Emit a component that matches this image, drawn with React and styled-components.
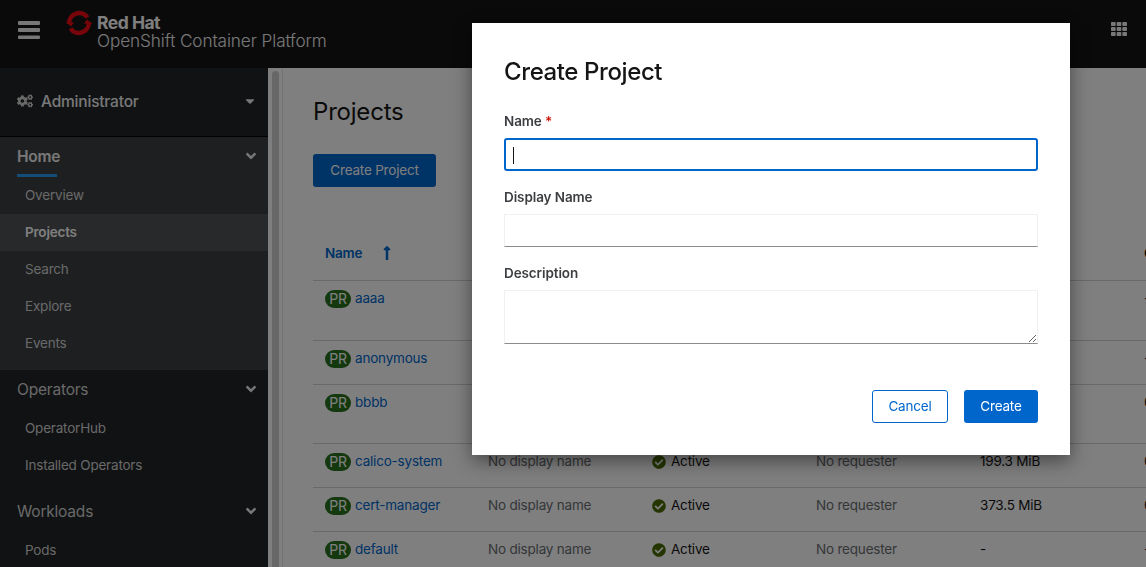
import React from 'react'
import styled, { createGlobalStyle } from 'styled-components'
import { FaCogs, FaCaretDown, FaAngleDown, FaTh, FaCheckCircle, FaLongArrowAltUp } from 'react-icons/fa'

const GlobalStyle = createGlobalStyle`
  html, body {
    margin: 0;
    height: 100%;
    overflow: hidden;
    font-family: Inter, "Noto Sans", sans-serif;
    font-size: 13.5px;
    letter-spacing: -0.2px;
    color: #151515;
    background: #fff;
  }
  * { box-sizing: border-box; }
`

const Page = styled.div`
  height: 567px;
  display: flex;
  flex-direction: column;
  overflow: hidden;
`

const Masthead = styled.header`
  height: 68px;
  flex: none;
  background: #151515;
  display: flex;
  align-items: flex-start;
  padding: 10px 19px 0 18px;
`

const Burger = styled.svg`
  width: 22px;
  height: 18px;
  margin-top: 11px;
  flex: none;
`

const LogoMark = styled.svg`
  width: 28px;
  height: 26px;
  margin-left: 25px;
  flex: none;
`

const Brand = styled.div`
  margin-left: 4px;
  padding-top: 4px;
  color: #fff;
  line-height: 18px;
`

const BrandTop = styled.div`
  font-size: 17.5px;
  font-weight: 700;
  letter-spacing: -0.5px;
`

const BrandBottom = styled.div`
  font-size: 17.2px;
  font-weight: 300;
  color: #f0f0f0;
  letter-spacing: -0.1px;
`

const AppsIcon = styled(FaTh)`
  margin: 11px 0 0 auto;
  font-size: 16px;
  color: #f0f0f0;
`

const Body = styled.div`
  flex: 1;
  display: flex;
  min-height: 0;
`

const Sidebar = styled.nav`
  width: 268px;
  flex: none;
  background: #212427;
  color: #d2d2d2;
  overflow: hidden;
`

const Perspective = styled.div`
  height: 69px;
  display: flex;
  align-items: center;
  padding: 0 11px 2px 17px;
  border-bottom: 1px solid #030303;
  font-size: 15.5px;
  font-weight: 500;
  color: #f0f0f0;

  svg:first-child {
    font-size: 16px;
    margin-right: 8px;
    color: #d2d2d2;
  }
  svg:last-child {
    margin-left: auto;
    font-size: 14px;
    color: #f0f0f0;
  }
`

const NavGroup = styled.div`
  padding-bottom: 8px;
  background: ${p => (p.$open ? '#3c3f42' : 'transparent')};
`

const GroupTitle = styled.div`
  position: relative;
  height: 40px;
  display: flex;
  align-items: center;
  justify-content: space-between;
  padding: 0 9px 2px 17px;
  font-size: 15.5px;
  font-weight: ${p => (p.$open ? 600 : 400)};
  color: ${p => (p.$open ? '#f0f0f0' : '#d2d2d2')};

  svg {
    font-size: 16px;
    color: #f0f0f0;
  }

  &::after {
    content: '';
    display: ${p => (p.$open ? 'block' : 'none')};
    position: absolute;
    left: 17px;
    bottom: 0;
    width: 40px;
    height: 3px;
    background: #2b9af3;
  }
`

const NavItem = styled.div`
  height: 37px;
  display: flex;
  align-items: center;
  padding: 0 0 2px 25px;
  font-size: 13.5px;
  font-weight: ${p => (p.$active ? 600 : 400)};
  color: ${p => (p.$active ? '#fff' : '#d2d2d2')};
  background: ${p => (p.$active ? '#4f5255' : 'transparent')};
`

const Scrollbar = styled.div`
  width: 15px;
  flex: none;
  background: #fff;
  border-right: 1px solid #e8e8e8;
  padding: 3px 3px 0 4px;
`

const ScrollThumb = styled.div`
  height: 100%;
  background: #cfcfcf;
  border-radius: 4px 4px 0 0;
`

const Main = styled.main`
  flex: 1;
  min-width: 0;
  overflow: hidden;
  background: #fff;
  padding: 27px 0 0 30px;
`

const PageTitle = styled.h1`
  margin: 0;
  font-size: 24px;
  line-height: 34px;
  font-weight: 400;
`

const PrimaryButton = styled.button`
  display: block;
  height: 33px;
  padding: 0 0 2px;
  border: 0;
  border-radius: 3px;
  background: #0066cc;
  color: #fff;
  font: inherit;
  letter-spacing: inherit;
  font-size: 13.5px;
`

const CreateButton = styled(PrimaryButton)`
  margin-top: 25px;
  width: 123px;
`

const Table = styled.div`
  margin-top: 39px;
  width: 980px;
`

const HeaderRow = styled.div`
  display: grid;
  grid-template-columns: 163px repeat(5, 164px);
  height: 55px;
  padding-bottom: 1px;
  align-items: center;
  border-bottom: 1px solid #d2d2d2;
  font-weight: 600;
`

const Row = styled.div`
  display: grid;
  grid-template-columns: 163px repeat(5, 164px);
  height: ${p => p.$height}px;
  padding-top: 7px;
  border-bottom: 1px solid #d2d2d2;
  line-height: 21px;
`

const Cell = styled.div`
  padding-left: 12px;
  display: flex;
  align-items: center;
  height: 21px;
  white-space: nowrap;
  color: ${p => (p.$muted ? '#6a6e73' : 'inherit')};
`

const NameHead = styled(Cell)`
  color: #0066cc;

  svg {
    margin-left: 17px;
    font-size: 16px;
  }
`

const Badge = styled.span`
  width: 26px;
  height: 18px;
  border-radius: 9px;
  flex: none;
  display: inline-flex;
  align-items: center;
  justify-content: center;
  margin-right: 4px;
  background: #28721f;
  color: #fff;
  font-size: 14px;
  font-weight: 400;
`

const NameLink = styled.a`
  color: #0066cc;
`

const StatusIcon = styled(FaCheckCircle)`
  color: #486b00;
  font-size: 14px;
  margin-right: 5px;
`

const Backdrop = styled.div`
  position: fixed;
  inset: 0;
  background: rgba(0, 0, 0, 0.5);
`

const Modal = styled.div`
  position: absolute;
  left: 472px;
  top: 23px;
  width: 598px;
  padding: 32px;
  background: #fff;
  box-shadow: 0 6px 18px rgba(0, 0, 0, 0.45);
`

const ModalTitle = styled.h2`
  margin: 0 0 22px;
  font-size: 24px;
  line-height: 34px;
  font-weight: 500;
  letter-spacing: -0.4px;
`

const Label = styled.label`
  display: block;
  margin: ${p => (p.$first ? 0 : '16px')} 0 7px;
  line-height: 20px;
  font-weight: 600;
  letter-spacing: -0.1px;
  color: #3c3f42;
`

const Required = styled.span`
  color: #c9190b;
`

const FieldWrap = styled.div`
  position: relative;
`

const TextInput = styled.input`
  display: block;
  width: 100%;
  height: 33px;
  outline: 0;
  background: #fff;
  border: 1px solid #f0f0f0;
  border-bottom-color: #8a8d90;
  ${p => p.$focused && 'border: 2px solid #0066cc; border-radius: 3px;'}
`

const TextArea = styled.textarea`
  display: block;
  width: 100%;
  height: 54px;
  outline: 0;
  background: #fff;
  border: 1px solid #f0f0f0;
  border-bottom-color: #8a8d90;
`

const Caret = styled.span`
  position: absolute;
  left: 9px;
  top: 9px;
  width: 1px;
  height: 17px;
  background: #151515;
`

const Actions = styled.div`
  margin-top: 46px;
  display: flex;
  justify-content: flex-end;
  gap: 16px;
`

const SecondaryButton = styled.button`
  width: 76px;
  height: 33px;
  padding: 0 0 2px;
  border: 1px solid #0066cc;
  border-radius: 3px;
  background: #fff;
  color: #0066cc;
  font: inherit;
  letter-spacing: inherit;
  font-size: 13.5px;
`

const ConfirmButton = styled(PrimaryButton)`
  width: 74px;
`

const navGroups = [
  { title: 'Home', open: true, items: ['Overview', 'Projects', 'Search', 'Explore', 'Events'] },
  { title: 'Operators', items: ['OperatorHub', 'Installed Operators'] },
  { title: 'Workloads', items: ['Pods'] },
]

const projects = [
  { name: 'aaaa', height: 60, memory: '-', cpu: '-' },
  { name: 'anonymous', height: 44, memory: '-', cpu: '-' },
  { name: 'bbbb', height: 59, memory: '120.4 MiB', cpu: '0.010 cores' },
  { name: 'calico-system', height: 44, memory: '199.3 MiB', cpu: '0.015 cores' },
  { name: 'cert-manager', height: 44, memory: '373.5 MiB', cpu: '0.005 cores' },
  { name: 'default', height: 44, memory: '-', cpu: '-' },
]

function RedHatLogo() {
  return (
    <LogoMark viewBox="0 0 28 26">
      <g fill="none" stroke="#ee0a14" strokeWidth="4.4">
        <path d="M4.2 13.5 A10 10 0 0 1 22.5 7.5" />
        <path d="M23.8 12.5 A10 10 0 0 1 5.5 18.5" />
      </g>
      <path d="M0.5 12 L9 12.5 L6 16.5 Z" fill="#ee0a14" />
      <path d="M27.5 14 L19 13.5 L22 9.5 Z" fill="#ee0a14" />
    </LogoMark>
  )
}

export default function App() {
  return (
    <Page>
      <GlobalStyle />
      <Masthead>
        <Burger viewBox="0 0 22 18" fill="#f0f0f0">
          <rect y="0" width="22" height="4" rx="1" />
          <rect y="7" width="22" height="4" rx="1" />
          <rect y="14.5" width="22" height="3.5" rx="1" />
        </Burger>
        <RedHatLogo />
        <Brand>
          <BrandTop>Red Hat</BrandTop>
          <BrandBottom>OpenShift Container Platform</BrandBottom>
        </Brand>
        <AppsIcon />
      </Masthead>
      <Body>
        <Sidebar>
          <Perspective>
            <FaCogs />
            Administrator
            <FaCaretDown />
          </Perspective>
          {navGroups.map(group => (
            <NavGroup key={group.title} $open={group.open}>
              <GroupTitle $open={group.open}>
                {group.title}
                <FaAngleDown />
              </GroupTitle>
              {group.items.map(item => (
                <NavItem key={item} $active={item === 'Projects'}>{item}</NavItem>
              ))}
            </NavGroup>
          ))}
        </Sidebar>
        <Scrollbar>
          <ScrollThumb />
        </Scrollbar>
        <Main>
          <PageTitle>Projects</PageTitle>
          <CreateButton>Create Project</CreateButton>
          <Table>
            <HeaderRow>
              <NameHead>Name<FaLongArrowAltUp /></NameHead>
              <Cell>Display Name</Cell>
              <Cell>Status</Cell>
              <Cell>Requester</Cell>
              <Cell>Memory</Cell>
              <Cell>CPU</Cell>
            </HeaderRow>
            {projects.map(project => (
              <Row key={project.name} $height={project.height}>
                <Cell><Badge>PR</Badge><NameLink>{project.name}</NameLink></Cell>
                <Cell $muted>No display name</Cell>
                <Cell><StatusIcon />Active</Cell>
                <Cell $muted>No requester</Cell>
                <Cell>{project.memory}</Cell>
                <Cell>{project.cpu}</Cell>
              </Row>
            ))}
          </Table>
        </Main>
      </Body>
      <Backdrop />
      <Modal>
        <ModalTitle>Create Project</ModalTitle>
        <Label $first>Name <Required>*</Required></Label>
        <FieldWrap>
          <TextInput $focused />
          <Caret />
        </FieldWrap>
        <Label>Display Name</Label>
        <TextInput />
        <Label>Description</Label>
        <TextArea />
        <Actions>
          <SecondaryButton>Cancel</SecondaryButton>
          <ConfirmButton>Create</ConfirmButton>
        </Actions>
      </Modal>
    </Page>
  )
}
